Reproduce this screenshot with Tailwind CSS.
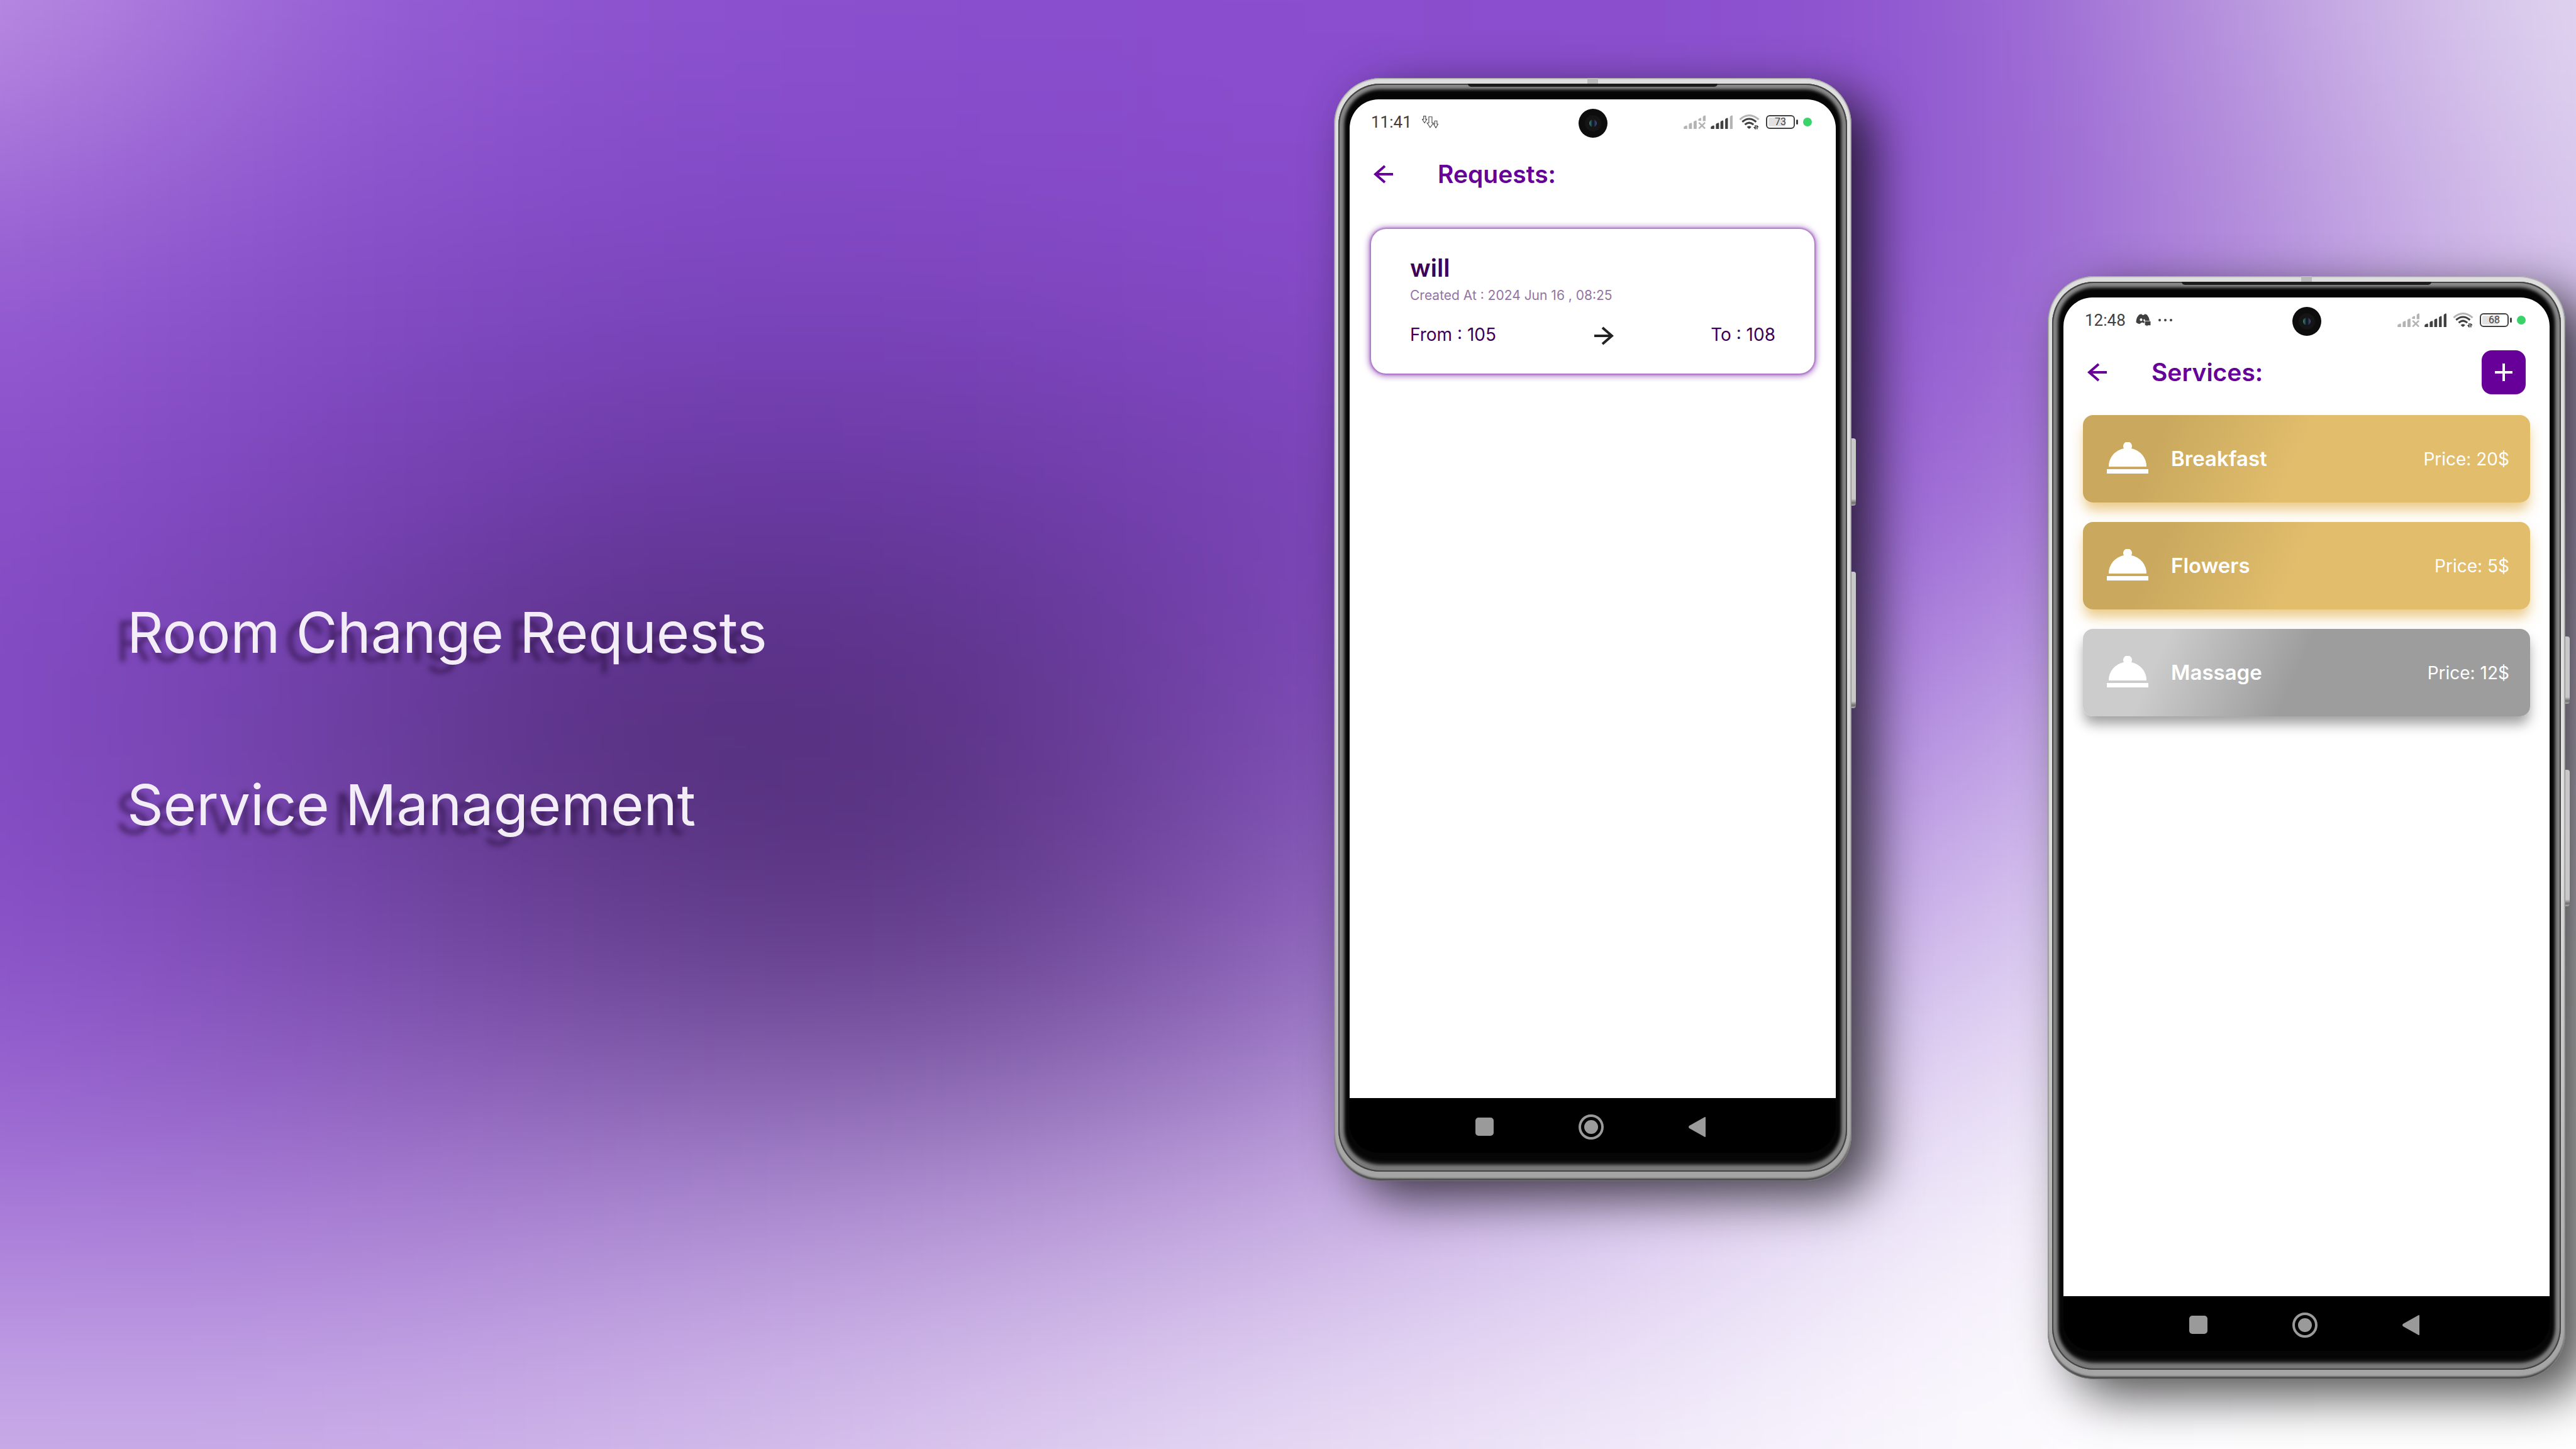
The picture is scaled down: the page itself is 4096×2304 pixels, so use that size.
<!DOCTYPE html>
<html lang="en">
<head>
<meta charset="utf-8">
<meta name="viewport" content="width=device-width, initial-scale=1">
<title>Room Change Requests and Service Management</title>
<script src="https://cdn.jsdelivr.net/npm/@tailwindcss/browser@4"></script>
</head>
<body class="bg-white font-[Inter,sans-serif]">

<!-- Shared icons -->
<svg class="hidden" aria-hidden="true">
  <symbol id="i-back" viewBox="0 0 32 30"><path d="M31 15H3M18 2L3 15L18 28" fill="none" stroke="currentColor" stroke-width="4"/></symbol>
  <symbol id="i-signal-off" viewBox="0 0 121 76">
    <g fill="#b4b4b4"><path d="M1 76v-9q0-4 4-6l10-4q5-1 5 4v15z"/><path d="M29 76V52q0-4 4-6l7-3q6-2 6 4v29z"/><path d="M55 76V39q0-4 4-6l7-3q6-2 6 4v42z"/><path d="M81 31v-6q0-4 4-6l6-3q6-2 6 4v11z"/><path d="M106 33V11q0-4 4-6l5-3q6-2 6 4v27z"/></g>
    <path d="M84 41l34 33M118 41L84 74" stroke="#b4b4b4" stroke-width="9" fill="none"/>
  </symbol>
  <symbol id="i-signal" viewBox="0 0 121 76">
    <path d="M1 76v-9q0-4 4-6l10-4q5-1 5 4v15z"/><path d="M29 76V52q0-4 4-6l7-3q6-2 6 4v29z"/><path d="M54 76V39q0-4 4-6l6-3q6-2 6 4v42z"/><path d="M80 76V25q0-4 4-6l5-3q6-2 6 4v56z"/>
  </symbol>
  <symbol id="i-signal-last" viewBox="0 0 121 76"><path d="M106 76V11q0-4 4-6l5-3q6-2 6 4v70z"/></symbol>
  <symbol id="i-wifi" viewBox="0 0 116 86">
    <g fill="none"><path d="M4 29Q57 -18 112 29" stroke="#b4b4b4" stroke-width="10"/><path d="M18 42Q57 8 97 42" stroke="#404040" stroke-width="11"/><path d="M33 58Q57 36 82 58" stroke="#404040" stroke-width="11"/></g>
    <path d="M44 71Q57 60 70 71L62 79Q57 83 52 79Z" fill="#404040"/>
    <path d="M81 72h8V61h6v24h-4zM98 61h4l11 12h-8v11h-6z" fill="#404040"/>
  </symbol>
  <symbol id="i-cloche" viewBox="0 0 66 50">
    <path d="M3 39A30 29 0 0 1 27 10A7 7 0 1 1 39 10A30 29 0 0 1 63 39Z"/><path d="M0 43h66v7H0z"/>
  </symbol>
</svg>

<main class="relative isolate flex min-h-screen w-full overflow-hidden">

  <!-- Soft colour mesh behind the page -->
  <svg id="mesh" class="absolute inset-0 -z-10 size-full" viewBox="0 0 8 6" preserveAspectRatio="none" aria-hidden="true">
    <filter id="soft" x="-20%" y="-20%" width="140%" height="140%" color-interpolation-filters="sRGB"><feGaussianBlur stdDeviation="0.5"/></filter>
    <g filter="url(#soft)"></g>
  </svg>

  <section class="flex flex-1 flex-col justify-center gap-[154px] pb-[18px] pl-[202px] text-[90px] leading-[120px] whitespace-nowrap text-[#f3edf8] [text-shadow:-19px_14px_8px_rgba(40,14,60,0.6)]">
    <h1>Room Change Requests</h1>
    <h1>Service Management</h1>
  </section>

  <div class="mr-[17px] flex shrink-0 items-start gap-[312px]">

    <!-- Phone: requests -->
    <article class="relative mt-[124px] aspect-[823/1754] w-[823px] rounded-[74px] bg-linear-to-b from-[#dedede] via-[#e2e2e2] to-[#a4a4a4] px-[7px] pt-[9px] pb-[15px] shadow-[36px_26px_80px_rgba(0,0,0,0.7),inset_0_0_2px_1px_#8c8c8c,inset_0_-4px_3px_#3a3a3a]">
      <span class="absolute top-[573px] -right-[7px] h-[107px] w-[7px] rounded-r-sm bg-linear-to-b from-[#c8c8c8] from-90% via-[#6e6e6e] via-96% to-[#b0b0b0]"></span>
      <span class="absolute top-[785px] -right-[7px] h-[217px] w-[7px] rounded-r-sm bg-linear-to-b from-[#c8c8c8] from-95% via-[#6e6e6e] via-98% to-[#b0b0b0]"></span>
      <span class="absolute top-0 left-[403px] h-[9px] w-[17px] bg-[#b9b9b9]"></span>
      <div class="relative flex h-full flex-col rounded-[67px] bg-[#060606] px-[18px] pt-[25px] pb-[30px] shadow-[inset_0_0_0_2px_#444,inset_0_-8px_10px_2px_#777,inset_0_0_5px_9px_#8c8c8c]">
        <span class="absolute top-0 left-[206px] h-[5px] w-[397px] rounded-b-lg bg-[#1c1c1c]"></span>
        <div class="relative flex flex-1 flex-col overflow-hidden rounded-[46px] bg-black">
          <div class="flex flex-1 flex-col bg-white">
            <div class="flex h-[72px] items-center pr-[38px] pl-[34px] font-[Roboto,sans-serif] text-[26px] text-[#404040]">
              <span>11:41</span>
              <svg class="ml-4 h-5 w-[26px]" viewBox="0 0 88 68" fill="none" stroke="#505050" stroke-width="4"><path d="M9 2h11v17h6L14 39 1 19h8z"/><path d="M37 6h17v33h8L44 64 28 39h9z"/><path d="M69 28h12v17h6L75 66 63 45h6z"/></svg>
              <svg class="ml-auto h-[22px] w-[35px]"><use href="#i-signal-off"/></svg>
              <span class="relative ml-2 h-[22px] w-[35px]"><svg class="absolute size-full fill-[#404040]"><use href="#i-signal"/></svg><svg class="absolute size-full fill-[#b4b4b4]"><use href="#i-signal-last"/></svg></span>
              <svg class="ml-[10px] h-6 w-[33px]"><use href="#i-wifi"/></svg>
              <span class="ml-[10px] flex h-[22px] w-[46px] items-center justify-center rounded-md border-2 border-[#404040] bg-linear-to-r from-[#e2e2e2] from-70% to-white to-70% text-base shadow-[inset_0_0_0_2px_#fff]">73</span>
              <span class="ml-[2px] h-2 w-[3px] rounded-sm bg-[#404040]"></span>
              <span class="ml-2 size-[14px] rounded-full bg-[#3ad36a]"></span>
            </div>
            <header class="flex h-[94px] items-center px-[38px] text-[#660099]">
              <button aria-label="Back"><svg class="h-[30px] w-8"><use href="#i-back"/></svg></button>
              <h2 class="ml-[70px] text-[39px] font-semibold">Requests:</h2>
            </header>
            <section class="mx-[34px] mt-10 flex h-[230px] flex-col rounded-[24px] bg-white px-[62px] pt-9 text-[#3d0058] shadow-[0_0_3px_2px_rgba(102,0,153,0.35),0_1px_10px_4px_rgba(102,0,153,0.45)]">
              <h3 class="text-[39px] leading-[52px] font-semibold">will</h3>
              <p class="mt-1 text-[21px] leading-7 text-[#9275a3]">Created At : 2024 Jun 16 , 08:25</p>
              <div class="mt-[30px] flex items-center justify-between text-[28px] leading-9">
                <span>From : 105</span>
                <svg class="mt-1 h-[30px] w-8 rotate-180 text-[#222222]"><use href="#i-back"/></svg>
                <span>To : 108</span>
              </div>
            </section>
          </div>
          <nav class="flex h-[87px] items-center justify-center gap-[135px] pt-1 pr-2">
            <button aria-label="Recent apps" class="size-[29px] rounded-[5px] bg-[#9a9a9a]"></button>
            <button aria-label="Home" class="flex size-10 items-center justify-center rounded-full border-4 border-[#9a9a9a]"><span class="size-[22px] rounded-full bg-[#9a9a9a]"></span></button>
            <button aria-label="Back"><svg class="h-8 w-[27px]" viewBox="0 0 27 32"><path d="M27 1v30q0 1-1 1L1 18q-2-2 0-4L26 0q1 0 1 1z" fill="#9a9a9a"/></svg></button>
          </nav>
          <span class="absolute top-[15px] left-[364px] flex size-[46px] items-center justify-center rounded-full bg-[#0d0d0d]"><span class="flex size-[26px] items-center justify-center rounded-full bg-[#151515]"><span class="size-3 rounded-full bg-linear-to-r from-[#3f8f88] via-[#0a0f18] via-50% to-[#4a5590]"></span></span></span>
        </div>
      </div>
    </article>

    <!-- Phone: services -->
    <article class="relative mt-[439px] aspect-[823/1754] w-[823px] rounded-[74px] bg-linear-to-b from-[#dedede] via-[#e2e2e2] to-[#a4a4a4] px-[7px] pt-[9px] pb-[15px] shadow-[36px_26px_80px_rgba(0,0,0,0.7),inset_0_0_2px_1px_#8c8c8c,inset_0_-4px_3px_#3a3a3a]">
      <span class="absolute top-[573px] -right-[7px] h-[107px] w-[7px] rounded-r-sm bg-linear-to-b from-[#c8c8c8] from-90% via-[#6e6e6e] via-96% to-[#b0b0b0]"></span>
      <span class="absolute top-[785px] -right-[7px] h-[217px] w-[7px] rounded-r-sm bg-linear-to-b from-[#c8c8c8] from-95% via-[#6e6e6e] via-98% to-[#b0b0b0]"></span>
      <span class="absolute top-0 left-[403px] h-[9px] w-[17px] bg-[#b9b9b9]"></span>
      <div class="relative flex h-full flex-col rounded-[67px] bg-[#060606] px-[18px] pt-[25px] pb-[30px] shadow-[inset_0_0_0_2px_#444,inset_0_-8px_10px_2px_#777,inset_0_0_5px_9px_#8c8c8c]">
        <span class="absolute top-0 left-[206px] h-[5px] w-[397px] rounded-b-lg bg-[#1c1c1c]"></span>
        <div class="relative flex flex-1 flex-col overflow-hidden rounded-[46px] bg-black">
          <div class="flex flex-1 flex-col bg-white">
            <div class="flex h-[72px] items-center pr-[38px] pl-[34px] font-[Roboto,sans-serif] text-[26px] text-[#404040]">
              <span>12:48</span>
              <svg class="ml-4 h-5 w-6" viewBox="0 0 80 68" fill="#404040"><path d="M18 4L30 1l4 5h10l4-5 12 4q12 14 14 32H46v12H40l-4-2q-8 0-10 4l-8 4Q6 52 1 46 1 20 18 4z"/><circle cx="28" cy="32" r="7" fill="#fff"/><path d="M40 34q6-10 10 1l-6 6z" fill="#fff"/><path d="M51 40h26q2 0 2 2v18q0 2-2 2H63l-3 6-3-6h-6q-2 0-2-2V42q0-2 2-2z"/></svg>
              <svg class="ml-3 h-1 w-[23px]" viewBox="0 0 23 4" fill="#404040"><circle cx="2" cy="2" r="2"/><circle cx="11" cy="2" r="2"/><circle cx="20" cy="2" r="2"/></svg>
              <svg class="ml-auto h-[22px] w-[35px]"><use href="#i-signal-off"/></svg>
              <span class="relative ml-2 h-[22px] w-[35px]"><svg class="absolute size-full fill-[#404040]"><use href="#i-signal"/></svg><svg class="absolute size-full fill-[#404040]"><use href="#i-signal-last"/></svg></span>
              <svg class="ml-[10px] h-6 w-[33px]"><use href="#i-wifi"/></svg>
              <span class="ml-[10px] flex h-[22px] w-[46px] items-center justify-center rounded-md border-2 border-[#404040] bg-linear-to-r from-[#e2e2e2] from-65% to-white to-65% text-base shadow-[inset_0_0_0_2px_#fff]">68</span>
              <span class="ml-[2px] h-2 w-[3px] rounded-sm bg-[#404040]"></span>
              <span class="ml-2 size-[14px] rounded-full bg-[#3ad36a]"></span>
            </div>
            <header class="flex h-[94px] items-center px-[38px] text-[#660099]">
              <button aria-label="Back"><svg class="h-[30px] w-8"><use href="#i-back"/></svg></button>
              <h2 class="ml-[70px] text-[39px] font-semibold">Services:</h2>
              <button aria-label="Add service" class="ml-auto flex size-[70px] items-center justify-center rounded-2xl bg-[#660099]"><svg class="size-7" viewBox="0 0 28 28"><path d="M14 0v28M0 14h28" stroke="#fff" stroke-width="4"/></svg></button>
            </header>
            <ul class="mx-[31px] mt-[21px] flex flex-col gap-[31px] text-white">
              <li class="flex h-[139px] items-center rounded-2xl bg-linear-[114deg,#caa95e_18%,#e1bd6c_48%] pr-[33px] pl-[38px] shadow-[0_14px_20px_-2px_rgba(226,180,84,0.7)]">
                <svg class="mb-1 h-[50px] w-[66px] fill-white"><use href="#i-cloche"/></svg>
                <h3 class="ml-[36px] text-[33px] font-semibold">Breakfast</h3>
                <span class="ml-auto text-[28px]">Price: 20$</span>
              </li>
              <li class="flex h-[139px] items-center rounded-2xl bg-linear-[114deg,#caa95e_18%,#e1bd6c_48%] pr-[33px] pl-[38px] shadow-[0_14px_20px_-2px_rgba(226,180,84,0.7)]">
                <svg class="mb-1 h-[50px] w-[66px] fill-white"><use href="#i-cloche"/></svg>
                <h3 class="ml-[36px] text-[33px] font-semibold">Flowers</h3>
                <span class="ml-auto text-[28px]">Price: 5$</span>
              </li>
              <li class="flex h-[139px] items-center rounded-2xl bg-linear-[114deg,#cccccc_18%,#9d9d9d_48%] pr-[33px] pl-[38px] shadow-[0_14px_20px_-2px_rgba(0,0,0,0.38)]">
                <svg class="mb-1 h-[50px] w-[66px] fill-white"><use href="#i-cloche"/></svg>
                <h3 class="ml-[36px] text-[33px] font-semibold">Massage</h3>
                <span class="ml-auto text-[28px]">Price: 12$</span>
              </li>
            </ul>
          </div>
          <nav class="flex h-[87px] items-center justify-center gap-[135px] pt-1 pr-2">
            <button aria-label="Recent apps" class="size-[29px] rounded-[5px] bg-[#9a9a9a]"></button>
            <button aria-label="Home" class="flex size-10 items-center justify-center rounded-full border-4 border-[#9a9a9a]"><span class="size-[22px] rounded-full bg-[#9a9a9a]"></span></button>
            <button aria-label="Back"><svg class="h-8 w-[27px]" viewBox="0 0 27 32"><path d="M27 1v30q0 1-1 1L1 18q-2-2 0-4L26 0q1 0 1 1z" fill="#9a9a9a"/></svg></button>
          </nav>
          <span class="absolute top-[15px] left-[364px] flex size-[46px] items-center justify-center rounded-full bg-[#0d0d0d]"><span class="flex size-[26px] items-center justify-center rounded-full bg-[#151515]"><span class="size-3 rounded-full bg-linear-to-r from-[#3f8f88] via-[#0a0f18] via-50% to-[#4a5590]"></span></span></span>
        </div>
      </div>
    </article>
  </div>
</main>

<script>
  // Colours of the mesh, one row of nine points for each sixth of the height.
  const mesh = [
    ['c096e4','9860d6','8d53d0','8a4fce','8a4ecf','8a4ece','8e54d0','bd9cdf','e6def2'],
    ['9a62d5','8850ca','8048c4','8348c5','884bcb','8a50cc','8e56ce','b28bdb','dccbee'],
    ['8b50cc','7b44b9','6a3aa3','6a3aa3','7943b6','8048c0','9c66d6','b590dd','d5c5ea'],
    ['844bc4','6a3ea0','502b76','56307f','7a48b2','8f5ccc','b792e2','d8c8ee','ece5f7'],
    ['8c53cc','7a4aaf','653f90','5f3a88','8a60b8','b090d8','d4bfee','f0eaf8','ffffff'],
    ['a678d8','a67ad4','ac88d4','b594d8','c8ace4','d8c6ee','f2ecfa','ffffff','ffffff'],
    ['cdb2ea','cdb2ea','d4bcec','deccf0','eadff6','f4eefb','fcfafe','ffffff','ffffff']
  ];
  const layer = document.querySelector('#mesh g');
  mesh.forEach((row, y) => row.forEach((color, x) => {
    const left = x === 0 ? -3 : x - 0.5, right = x === 8 ? 11 : x + 0.5;
    const top = y === 0 ? -3 : y - 0.5, bottom = y === 6 ? 9 : y + 0.5;
    const cell = document.createElementNS('http://www.w3.org/2000/svg', 'rect');
    cell.setAttribute('x', left);
    cell.setAttribute('y', top);
    cell.setAttribute('width', right - left);
    cell.setAttribute('height', bottom - top);
    cell.setAttribute('fill', '#' + color);
    layer.append(cell);
  }));
</script>
</body>
</html>
